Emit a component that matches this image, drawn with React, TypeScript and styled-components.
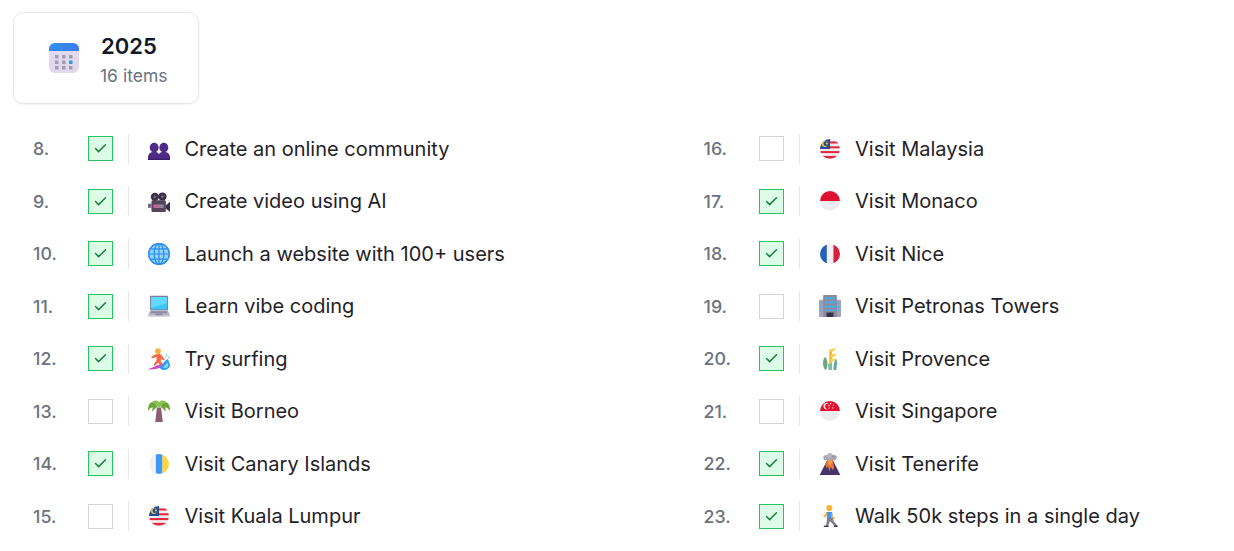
import React from 'react'
import styled, { createGlobalStyle } from 'styled-components'

type IconName =
  | 'people' | 'camera' | 'globe' | 'laptop' | 'surfer' | 'palm' | 'canary' | 'malaysia'
  | 'monaco' | 'france' | 'towers' | 'wheat' | 'singapore' | 'volcano' | 'walker'

interface Goal {
  index: number
  title: string
  icon: IconName
  done: boolean
}

const goals: Goal[] = [
  { index: 8, title: 'Create an online community', icon: 'people', done: true },
  { index: 16, title: 'Visit Malaysia', icon: 'malaysia', done: false },
  { index: 9, title: 'Create video using AI', icon: 'camera', done: true },
  { index: 17, title: 'Visit Monaco', icon: 'monaco', done: true },
  { index: 10, title: 'Launch a website with 100+ users', icon: 'globe', done: true },
  { index: 18, title: 'Visit Nice', icon: 'france', done: true },
  { index: 11, title: 'Learn vibe coding', icon: 'laptop', done: true },
  { index: 19, title: 'Visit Petronas Towers', icon: 'towers', done: false },
  { index: 12, title: 'Try surfing', icon: 'surfer', done: true },
  { index: 20, title: 'Visit Provence', icon: 'wheat', done: true },
  { index: 13, title: 'Visit Borneo', icon: 'palm', done: false },
  { index: 21, title: 'Visit Singapore', icon: 'singapore', done: false },
  { index: 14, title: 'Visit Canary Islands', icon: 'canary', done: true },
  { index: 22, title: 'Visit Tenerife', icon: 'volcano', done: true },
  { index: 15, title: 'Visit Kuala Lumpur', icon: 'malaysia', done: false },
  { index: 23, title: 'Walk 50k steps in a single day', icon: 'walker', done: true },
]

const MalaysiaFlag = ({ id }: { id: string }) => (
  <>
    <clipPath id={id}><circle cx="16" cy="16" r="14.500" /></clipPath>
    <g clipPath={`url(#${id})`}>
      <rect x="1" y="1" width="30" height="30" fill="#f1eff2" />
      <rect x="1" y="5" width="30" height="3" fill="#e5283c" />
      <rect x="1" y="12" width="30" height="3" fill="#e5283c" />
      <rect x="1" y="19" width="30" height="3" fill="#e5283c" />
      <rect x="1" y="26" width="30" height="4" fill="#e5283c" />
      <rect x="1" y="1" width="15" height="15" fill="#1d4f9e" />
      <circle cx="8.500" cy="8.500" r="4.500" fill="#f8c62c" />
      <circle cx="10" cy="8.200" r="3.500" fill="#1d4f9e" />
      <circle cx="11.500" cy="8" r="1.600" fill="#f8c62c" />
    </g>
  </>
)

const icons: Record<IconName, React.ReactNode> = {
  people: (
    <>
      <g fill="#4f2a86">
        <ellipse cx="9" cy="14" rx="6.500" ry="7" />
        <path d="M0 32v-3.500C0 23 4 20 9 20s8 3 8 8.500V32z" />
        <ellipse cx="23" cy="14" rx="6.500" ry="7" />
        <path d="M32 32v-3.500C32 23 28 20 23 20s-8 3-8 8.500V32z" />
      </g>
      <rect x="0" y="30" width="32" height="2" fill="#3b1f6a" />
    </>
  ),
  camera: (
    <>
      <circle cx="10" cy="10" r="6" fill="#3b2f45" />
      <circle cx="21" cy="9.500" r="6" fill="#3b2f45" />
      <circle cx="10" cy="10" r="2" fill="#75687f" />
      <circle cx="21" cy="9.500" r="2" fill="#75687f" />
      <rect x="5" y="15" width="21" height="17" rx="2" fill="#52465c" />
      <rect x="0" y="20" width="5" height="6" fill="#75687f" />
      <path d="M26 22l6-5v15l-6-5z" fill="#3b2f45" />
      <rect x="8" y="21" width="15" height="5" rx="1" fill="#8f8499" />
      <rect x="9" y="21.500" width="4" height="4" fill="#f0508a" />
    </>
  ),
  globe: (
    <>
      <circle cx="16" cy="16" r="16" fill="#49a8f5" />
      <circle cx="16" cy="15.500" r="14.500" fill="#8fd3fb" />
      <g fill="none" stroke="#2f8df0" strokeWidth="1.800">
        <circle cx="16" cy="16" r="15" />
        <ellipse cx="16" cy="16" rx="7" ry="15" />
        <path d="M16 1v30M1.500 16h29M3.500 8.500h25M3.500 23.500h25" />
      </g>
    </>
  ),
  laptop: (
    <>
      <rect x="3" y="1" width="26" height="21" rx="1" fill="#7d7a9c" />
      <rect x="4.500" y="3" width="23" height="18" fill="#3bc8f6" />
      <path d="M4.500 3h23v9L4.500 19z" fill="#62d8fa" />
      <path d="M3 22h26l3 8H0z" fill="#b4b0c4" />
      <path d="M5 23.500h22l1 3H4z" fill="#8e8aa4" />
      <rect x="11" y="27" width="10" height="3" fill="#8e8aa4" />
      <rect x="0" y="30" width="32" height="2" fill="#d8d5e0" />
    </>
  ),
  surfer: (
    <>
      <circle cx="14.500" cy="4.500" r="4.200" fill="#f9b33a" />
      <path d="M10 9.500l7.500-1 3.500 3.500 3.500 5-2 1.300-3.500-2.800-.5 4 4 4.500-2.500 2-5.500-4.500-4.500 4.500-2-2 4-5.500.8-5.500L6 15l-1.500-2z" fill="#fb6b45" />
      <path d="M0 31c5-1 15-8 24-8l-3 5c-6 2-14 4-21 3z" fill="#d44cbc" />
      <path d="M17 28c4-3 6-9 12-12 1 4 3 6 3 9 0 4-5 7-9 7-3 0-5-1-6-4z" fill="#2f9cef" />
      <path d="M22 28c2-2 4-5 7-7 0 3 1 4 0 6-1 2-4 3-7 1z" fill="#8ddcfa" />
      <circle cx="27" cy="10" r="1.200" fill="#6dc8f7" />
      <circle cx="30.500" cy="14" r="1.200" fill="#6dc8f7" />
      <circle cx="25" cy="13" r="1" fill="#6dc8f7" />
    </>
  ),
  palm: (
    <>
      <path d="M13 11h6l2.500 21h-11z" fill="#8a5d72" />
      <path d="M14 10C12 5 7 2 4 4 1 6 0 10 0 16c2-3 5-6 7-5-1 2-1 5 0 6 1-3 4-6 7-7z" fill="#6da53d" />
      <path d="M18 10c2-5 7-8 10-6 3 2 4 6 4 12-2-3-5-6-7-5 1 2 1 5 0 6-1-3-4-6-7-7z" fill="#6da53d" />
      <path d="M16 12C13 7 9 4 6 2c3-2 8-2 10 1 2-3 7-3 10-1-3 2-7 5-10 10z" fill="#8cc152" />
    </>
  ),
  canary: (
    <>
      <clipPath id="canary-clip"><circle cx="16" cy="16" r="14.500" /></clipPath>
      <g clipPath="url(#canary-clip)">
        <rect x="1" y="1" width="10.500" height="30" fill="#f1eff2" />
        <rect x="11.500" y="1" width="9.500" height="30" fill="#3f96f4" />
        <rect x="21" y="1" width="10" height="30" fill="#fdd33f" />
      </g>
    </>
  ),
  malaysia: <MalaysiaFlag id="my-clip" />,
  monaco: (
    <>
      <circle cx="16" cy="16" r="14.500" fill="#eeecef" />
      <path d="M1.500 16a14.500 14.500 0 0 1 29 0z" fill="#e0102f" />
    </>
  ),
  france: (
    <>
      <clipPath id="fr-clip"><circle cx="16" cy="16" r="14.500" /></clipPath>
      <g clipPath="url(#fr-clip)">
        <rect x="1" y="1" width="10.500" height="30" fill="#2361b8" />
        <rect x="11.500" y="1" width="9.500" height="30" fill="#f1eff2" />
        <rect x="21" y="1" width="10" height="30" fill="#d91f3c" />
      </g>
    </>
  ),
  towers: (
    <>
      <rect x="0" y="7" width="32" height="25" rx="1" fill="#a7a3b5" />
      <rect x="6" y="0" width="20" height="32" rx="1" fill="#8d8a9c" />
      <g fill="#3fb4f2">
        <rect x="9" y="3" width="3.500" height="3.500" /><rect x="14.300" y="3" width="3.500" height="3.500" /><rect x="19.500" y="3" width="3.500" height="3.500" />
        <rect x="9" y="9" width="3.500" height="3.500" /><rect x="14.300" y="9" width="3.500" height="3.500" /><rect x="19.500" y="9" width="3.500" height="3.500" />
        <rect x="9" y="15" width="3.500" height="3.500" /><rect x="14.300" y="15" width="3.500" height="3.500" /><rect x="19.500" y="15" width="3.500" height="3.500" />
        <rect x="9" y="21" width="3.500" height="2.500" /><rect x="14.300" y="21" width="3.500" height="2.500" /><rect x="19.500" y="21" width="3.500" height="2.500" />
        <rect x="2" y="11" width="2.500" height="3" /><rect x="2" y="16" width="2.500" height="3" /><rect x="2" y="21" width="2.500" height="3" />
        <rect x="27.500" y="11" width="2.500" height="3" /><rect x="27.500" y="16" width="2.500" height="3" /><rect x="27.500" y="21" width="2.500" height="3" />
      </g>
      <rect x="11" y="25.500" width="10" height="6.500" fill="#37304a" />
    </>
  ),
  wheat: (
    <>
      <path d="M9 13c3 3 4 8 3 13 0 3-1 5-3 6-2-3-4-8-3-12 0-3 1-5 3-7z" fill="#6da87a" />
      <path d="M25 15c2 4 1 11 0 17h-4c0-6 1-13 4-17z" fill="#5aa6a0" />
      <rect x="15" y="3" width="4" height="29" fill="#f0b63e" />
      <path d="M15 2l10-2-3 4-7 3zM17 9l9-1-3 4-6 3zM17 16l7-1-2 4-5 2z" fill="#fbcf4a" />
      <path d="M13 23h6v9h-5z" fill="#7fb9a8" />
    </>
  ),
  singapore: (
    <>
      <circle cx="16" cy="16" r="14.500" fill="#eeecef" />
      <path d="M1.500 16a14.500 14.500 0 0 1 29 0z" fill="#e0102f" />
      <circle cx="11" cy="9" r="4.500" fill="#f6e9ec" />
      <circle cx="13" cy="9" r="4" fill="#e0102f" />
      <g fill="#f6e9ec">
        <circle cx="17" cy="5.500" r="1" /><circle cx="21" cy="7.500" r="1" /><circle cx="20" cy="11.500" r="1" />
        <circle cx="15" cy="11.500" r="1" /><circle cx="14.500" cy="8" r="1" />
      </g>
    </>
  ),
  volcano: (
    <>
      <path d="M12 10L1 32h30L20 10z" fill="#46356b" />
      <path d="M12 10l-3 7 2 5 2-3 2 8 2-7 3 5 2-4-2-11z" fill="#f0703a" />
      <path d="M13.500 10h5l1 6-2-1-1 6-1.500-6-1.500 2z" fill="#f9a13c" />
      <circle cx="10" cy="6.500" r="3.700" fill="#a8a6b2" />
      <circle cx="16" cy="4.500" r="4.500" fill="#b8b6c0" />
      <circle cx="22" cy="6.500" r="3.700" fill="#9a98a6" />
      <rect x="7" y="6.500" width="18" height="4" rx="2" fill="#a8a6b2" />
    </>
  ),
  walker: (
    <>
      <circle cx="15" cy="4.500" r="4.500" fill="#f9b33a" />
      <path d="M11 10h8l1.500 9h-9z" fill="#3f96f4" />
      <path d="M11 10l-5 7 2.200 1.600 4.500-5zM18 10.500l2 6.500 4 1.500-.9 2-5.100-2z" fill="#f9b33a" />
      <path d="M11.500 19h9l.5 4 5 6.500-2.500 2-6.500-7-1-1-3.500 8.500H9.500l2-9.500z" fill="#85808f" />
      <rect x="7" y="30" width="7" height="2" fill="#3f3a6b" />
      <rect x="22" y="29.500" width="5" height="2.500" fill="#3f3a6b" />
    </>
  ),
}

const App: React.FC = () => (
  <Page>
    <GlobalStyle />
    <SummaryCard>
      <svg width="30" height="30" viewBox="0 0 30 30">
        <defs>
          <linearGradient id="calendar-head" x1="0" y1="0" x2="1" y2="0">
            <stop offset="0" stopColor="#2f8ff2" />
            <stop offset="1" stopColor="#3a7cf0" />
          </linearGradient>
        </defs>
        <rect x="0" y="0" width="30" height="30" rx="6" fill="#e3d9ef" />
        <path d="M0 8V6a6 6 0 0 1 6-6h18a6 6 0 0 1 6 6v2z" fill="url(#calendar-head)" />
        {[6, 13, 20].map((x) =>
          [12, 17.500, 23].map((y) => (
            <rect key={`${x}-${y}`} x={x} y={y} width="3.500" height="3.500"
              fill={x === 20 && y === 17.500 ? '#2f9cf4' : '#a39bb0'} />
          )),
        )}
      </svg>
      <SummaryText>
        <SummaryTitle>2025</SummaryTitle>
        <SummaryCount>16 items</SummaryCount>
      </SummaryText>
    </SummaryCard>
    <GoalGrid>
      {goals.map((goal) => (
        <GoalRow key={goal.index}>
          <GoalIndex>{goal.index}.</GoalIndex>
          <CheckBox done={goal.done}>
            {goal.done && (
              <svg width="15" height="15" viewBox="0 0 24 24" fill="none" stroke="#16803d" strokeWidth="2.300" strokeLinecap="round" strokeLinejoin="round">
                <path d="M20 6 9 17l-5-5" />
              </svg>
            )}
          </CheckBox>
          <Divider />
          <EmojiIcon viewBox="0 0 32 32">{icons[goal.icon]}</EmojiIcon>
          <GoalTitle>{goal.title}</GoalTitle>
        </GoalRow>
      ))}
    </GoalGrid>
  </Page>
)
export default App

const GlobalStyle = createGlobalStyle`
  html, body {
    margin: 0;
    background: #ffffff;
    font-family: Inter, "Noto Sans", sans-serif;
  }
`
const Page = styled.div`
  padding: 12px 0 0 13px;
  height: 539px;
  overflow: hidden;
`
const SummaryCard = styled.div`
  box-sizing: border-box;
  width: 186px;
  height: 92px;
  display: flex;
  align-items: center;
  gap: 21px;
  padding-left: 35px;
  border: 1px solid #e5e7eb;
  border-radius: 10px;
  box-shadow: 0 1px 2px rgba(0, 0, 0, 0.05);
`
const SummaryText = styled.div`
  display: flex;
  flex-direction: column;
  gap: 6px;
  margin-top: 2px;
`
const SummaryTitle = styled.div`
  font-size: 22px;
  line-height: 28px;
  font-weight: 600;
  color: #111827;
  padding-left: 1px;
`
const SummaryCount = styled.div`
  font-size: 17.5px;
  line-height: 20px;
  color: #6b7280;
`
const GoalGrid = styled.div`
  display: grid;
  grid-template-columns: 670.5px 1fr;
  grid-auto-rows: 52.5px;
  margin-top: 18.5px;
  padding-left: 20px;
`
const GoalRow = styled.div`
  display: flex;
  align-items: center;
  height: 52.5px;
`
const GoalIndex = styled.div`
  width: 55px;
  font-size: 17.8px;
  font-weight: 500;
  color: #6b7280;
`
const CheckBox = styled.div<{ done: boolean }>`
  box-sizing: border-box;
  width: 25px;
  height: 25px;
  display: flex;
  align-items: center;
  justify-content: center;
  border: 1px solid ${({ done }) => (done ? '#22c55e' : '#d1d5db')};
  background: ${({ done }) => (done ? '#dcfce7' : '#ffffff')};
`
const Divider = styled.div`
  width: 1px;
  height: 30px;
  margin: 0 19px 0 15px;
  background: #e5e7eb;
`
const EmojiIcon = styled.svg`
  width: 22px;
  height: 22px;
  flex: none;
`
const GoalTitle = styled.div`
  margin-left: 14.5px;
  font-size: 20px;
  color: #1f2228;
`
